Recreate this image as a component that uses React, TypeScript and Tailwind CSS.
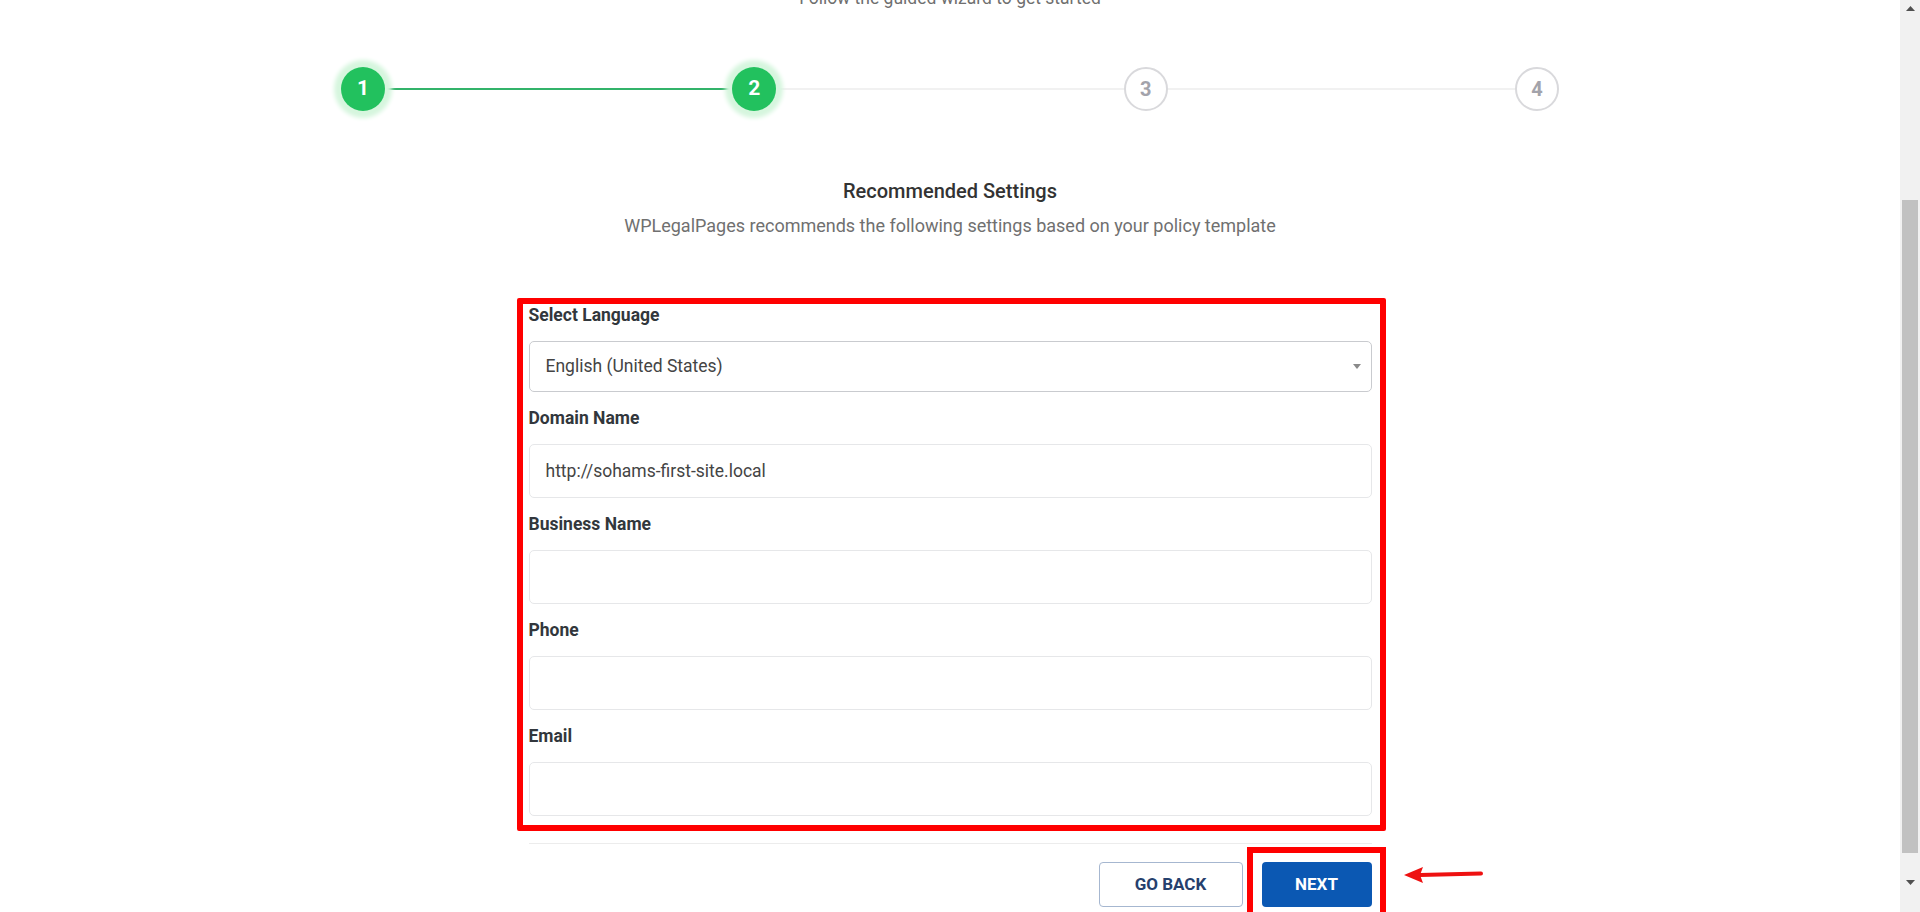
import React from "react";

const font = { fontFamily: "Roboto, 'Liberation Sans', Arial, sans-serif" };

function DoneStep({ n }: { n: number }) {
  return (
    <div className="relative flex h-[44px] w-[44px] shrink-0 items-center justify-center rounded-full bg-[#22c15e] text-[21px] font-bold text-white shadow-[0_0_4px_7px_#d6f6de]">
      {n}
    </div>
  );
}

function TodoStep({ n }: { n: number }) {
  return (
    <div className="flex h-[44px] w-[44px] shrink-0 items-center justify-center rounded-full border-2 border-[#d9d9dc] bg-white text-[20px] font-bold text-[#a3a3ab]">
      {n}
    </div>
  );
}

function Field({ label, value, last }: { label: string; value?: string; last?: boolean }) {
  return (
    <div className={last ? "" : "mb-[14px]"}>
      <div className="mb-[14px] text-[17.5px] font-bold leading-[24px] text-[#32373c]">{label}</div>
      <div className="flex h-[54px] items-center rounded-[5px] border border-[#e6e7e9] bg-white px-[16px] text-[17.5px] text-[#444]">
        {value}
      </div>
    </div>
  );
}

export default function App() {
  return (
    <div className="flex h-[912px] w-full overflow-hidden bg-white" style={font}>
      <div className="flex min-w-0 flex-1 flex-col items-center">
        <div className="mt-[-14px] text-[17.5px] leading-[24px] text-[#6f6f6f]">
          Follow the guided wizard to get started
        </div>

        <div className="mt-[57px] flex w-[1218px] items-center">
          <DoneStep n={1} />
          <div className="h-[2px] flex-1 bg-[#33b36a]" />
          <DoneStep n={2} />
          <div className="h-[2px] flex-1 bg-[#f1f1f1]" />
          <TodoStep n={3} />
          <div className="h-[2px] flex-1 bg-[#f1f1f1]" />
          <TodoStep n={4} />
        </div>

        <div className="mt-[66px] text-[20px] font-medium leading-[28px] text-[#333]">Recommended Settings</div>
        <div className="mt-[8px] text-[18px] leading-[26px] text-[#707070]">
          WPLegalPages recommends the following settings based on your policy template
        </div>

        <div className="relative mt-[64px] w-[843px]">
          <div className="pointer-events-none absolute bottom-[-15px] left-[-12px] right-[-14px] top-[-5px] rounded-[2px] border-[6px] border-[#ff0000]" />
          <div className="mb-[14px]">
            <div className="mb-[14px] text-[17.5px] font-bold leading-[24px] text-[#32373c]">Select Language</div>
            <div className="flex h-[51px] items-center justify-between rounded-[5px] border border-[#c9cbcf] bg-white pl-[16px] pr-[10px] text-[17.5px] text-[#444]">
              <span>English (United States)</span>
              <svg width="8" height="6" viewBox="0 0 8 6">
                <path d="M0 0 L8 0 L4 5 Z" fill="#8a8a8a" />
              </svg>
            </div>
          </div>
          <Field label="Domain Name" value="http://sohams-first-site.local" />
          <Field label="Business Name" />
          <Field label="Phone" />
          <Field label="Email" last />
        </div>

        <div className="mt-[27px] h-px w-[843px] bg-[#ececec]" />

        <div className="relative mt-[18px] flex w-[843px] justify-end gap-[19px]">
          <button className="flex h-[45px] w-[144px] items-center justify-center rounded-[4px] border border-[#a6b7d0] bg-white text-[17px] font-bold text-[#26406d]">
            GO BACK
          </button>
          <div className="relative">
            <div className="pointer-events-none absolute bottom-[-20px] left-[-15px] right-[-14px] top-[-15px] border-[6px] border-[#ff0000]" />
            <button className="flex h-[45px] w-[110px] items-center justify-center rounded-[4px] bg-[#0b58b3] text-[17px] font-bold text-white">
              NEXT
            </button>
          </div>
          <svg
            className="absolute right-[-112px] top-[3px]"
            width="80"
            height="20"
            viewBox="0 0 80 20"
          >
            <path d="M16 10 L77 8.5" stroke="#ee1111" strokeWidth="4" strokeLinecap="round" />
            <path d="M0 10 L19 2 L16 10 L19 18 Z" fill="#ee1111" />
          </svg>
        </div>
      </div>

      <div className="flex w-[20px] shrink-0 flex-col items-center bg-[#f1f1f1]">
        <div className="flex h-[17px] items-center justify-center">
          <svg width="9" height="5" viewBox="0 0 9 5">
            <path d="M0 5 L4.5 0 L9 5 Z" fill="#505050" />
          </svg>
        </div>
        <div className="mt-[183px] h-[653px] w-[16px] bg-[#c1c1c1]" />
        <div className="flex flex-1 items-center justify-center">
          <svg width="9" height="5" viewBox="0 0 9 5">
            <path d="M0 0 L4.5 5 L9 0 Z" fill="#505050" />
          </svg>
        </div>
      </div>
    </div>
  );
}
